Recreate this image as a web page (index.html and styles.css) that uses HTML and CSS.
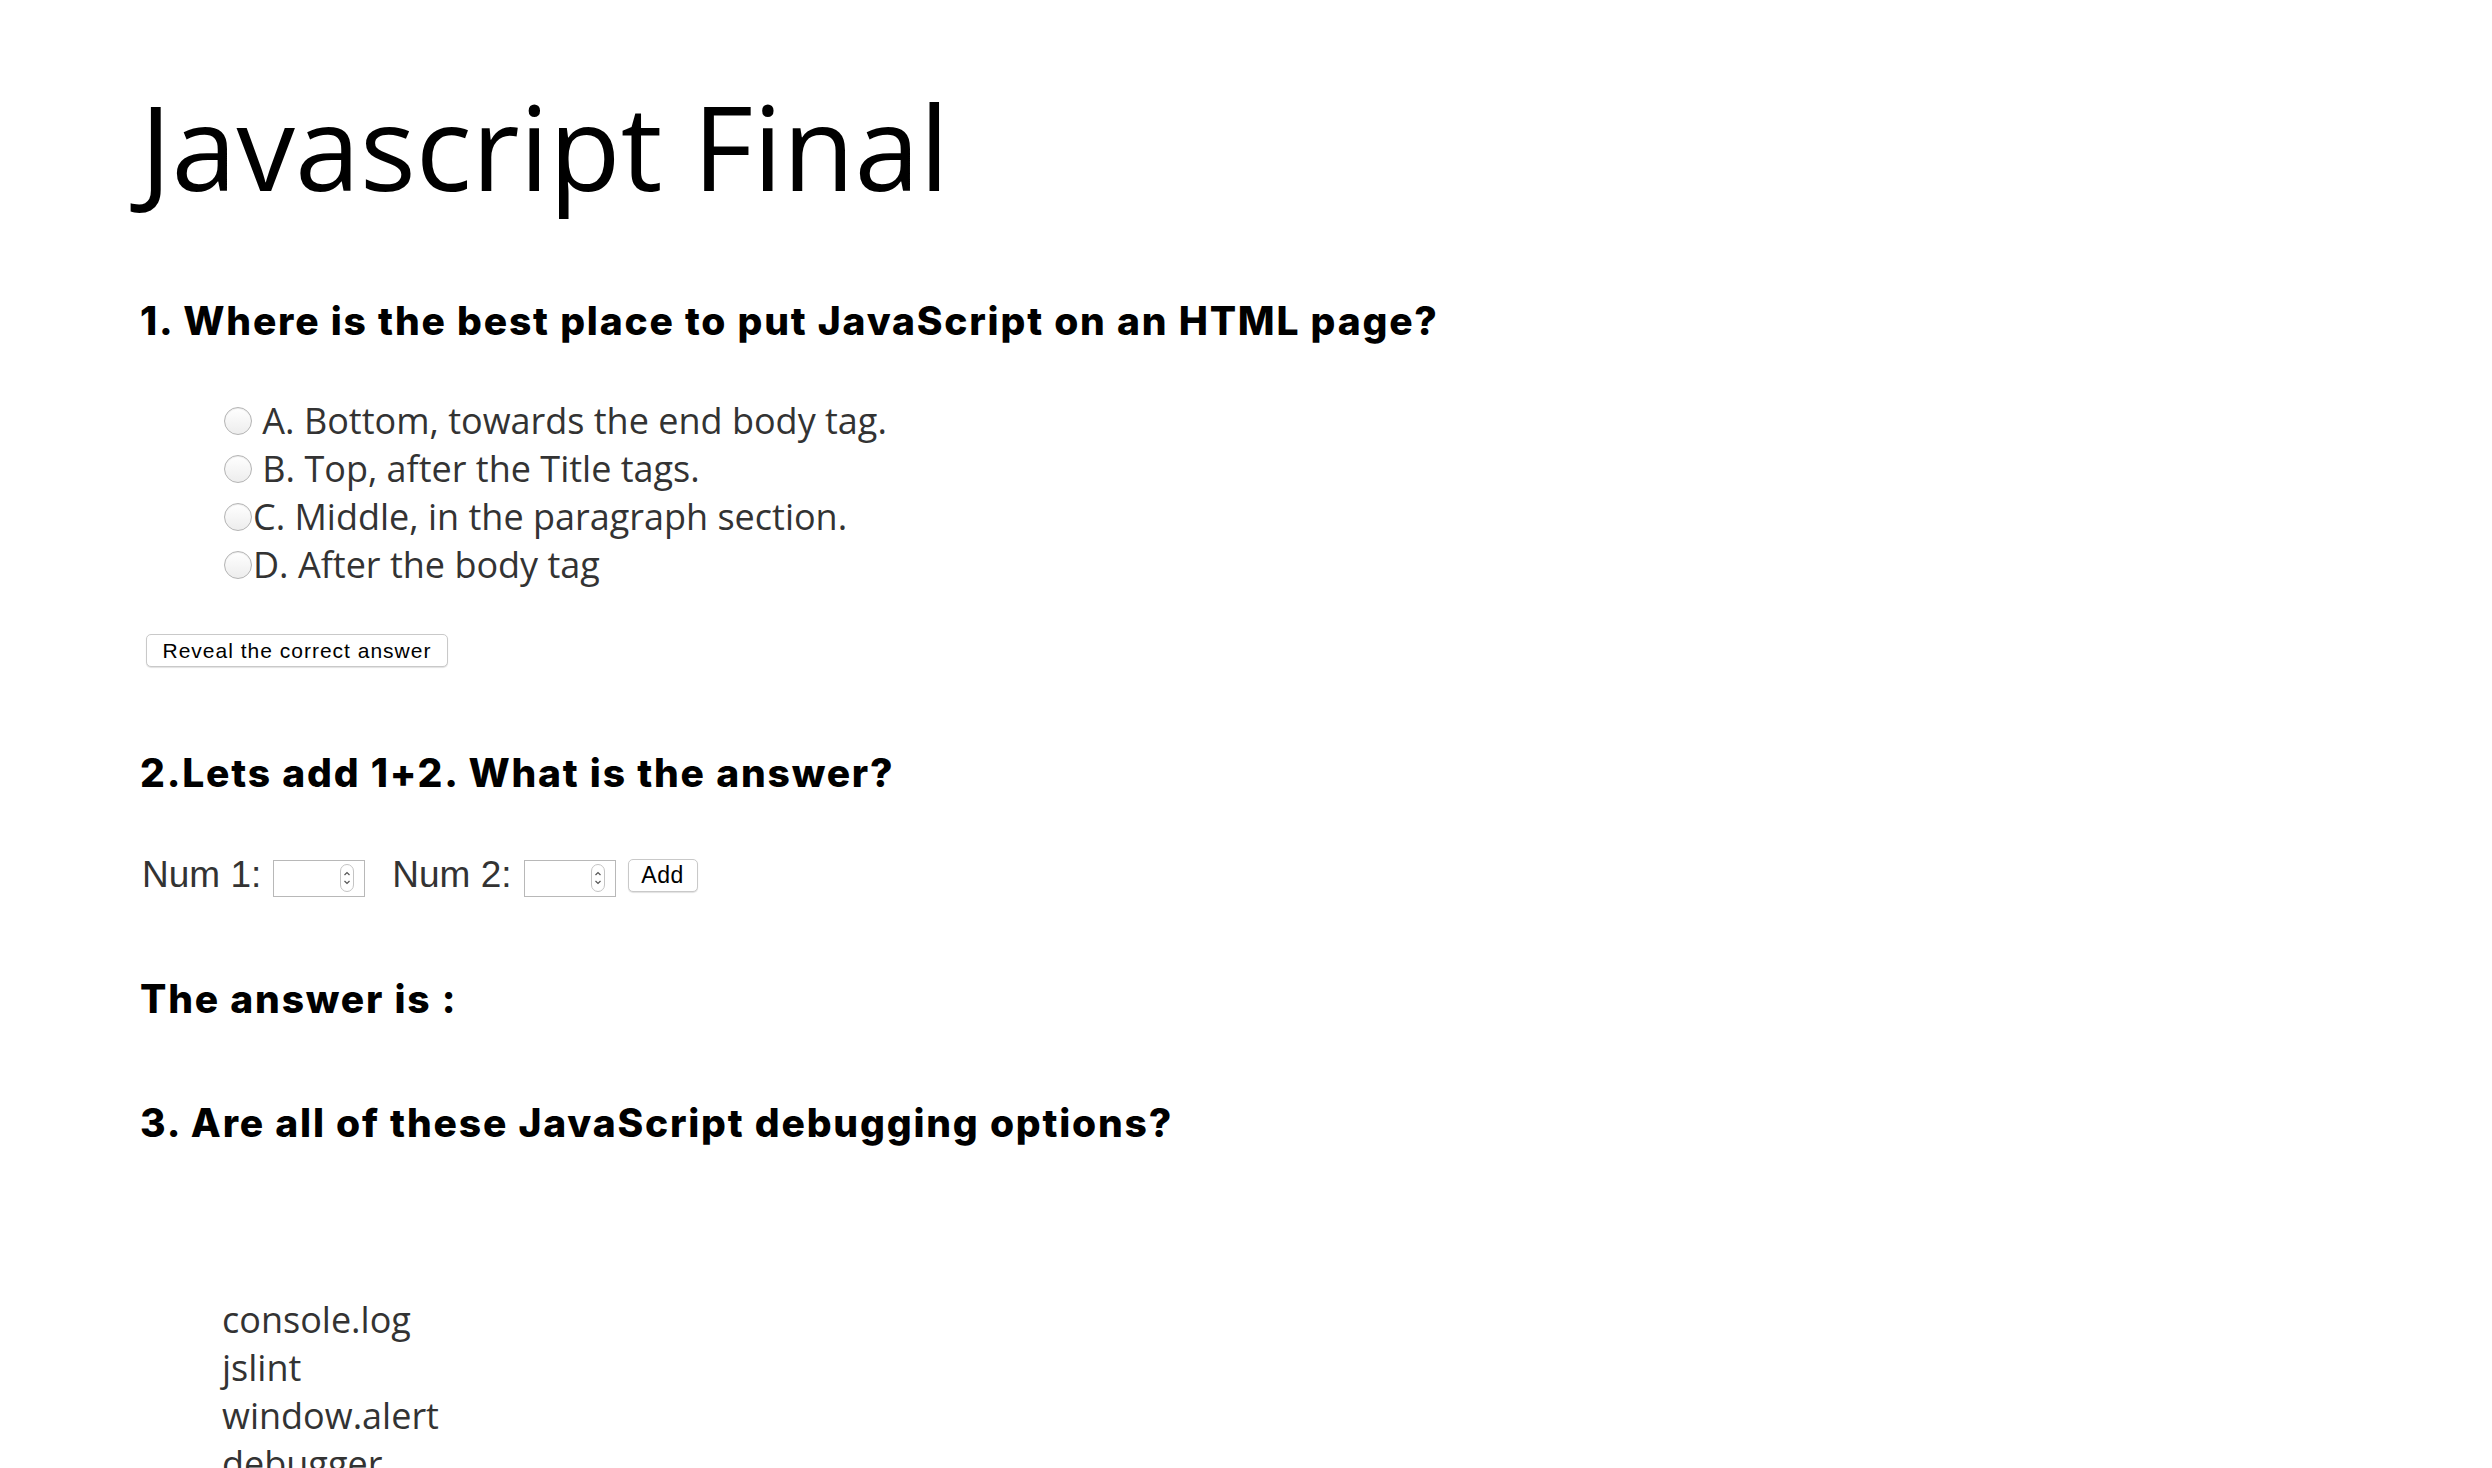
FILE: index.html
```html
<!DOCTYPE html>
<html lang="en">
<head>
<meta charset="utf-8">
<title>Javascript Final</title>
<link rel="stylesheet" href="styles.css">
</head>
<body>
<main class="page">
  <h1 class="title">Javascript Final</h1>

  <h2 class="question q1">1. Where is the best place to put JavaScript on an HTML page?</h2>
  <ul class="options">
    <li><span class="radio"></span> A. Bottom, towards the end body tag.</li>
    <li><span class="radio"></span> B. Top, after the Title tags.</li>
    <li><span class="radio"></span>C. Middle, in the paragraph section.</li>
    <li><span class="radio"></span>D. After the body tag</li>
  </ul>
  <button class="btn reveal" type="button">Reveal the correct answer</button>

  <h2 class="question q2">2.Lets add 1+2. What is the answer?</h2>
  <div class="calc">
    <span class="num-label">Num 1:</span>
    <span class="num-input"><span class="spin"><svg viewBox="0 0 14 28" width="14" height="28"><path d="M4.5 11 L7 8.5 L9.5 11" fill="none" stroke="#555" stroke-width="1.2"/><path d="M4.5 17 L7 19.5 L9.5 17" fill="none" stroke="#555" stroke-width="1.2"/></svg></span></span>
    <span class="num-label second">Num 2:</span>
    <span class="num-input"><span class="spin"><svg viewBox="0 0 14 28" width="14" height="28"><path d="M4.5 11 L7 8.5 L9.5 11" fill="none" stroke="#555" stroke-width="1.2"/><path d="M4.5 17 L7 19.5 L9.5 17" fill="none" stroke="#555" stroke-width="1.2"/></svg></span></span>
    <button class="btn add" type="button">Add</button>
  </div>

  <h3 class="answer">The answer is :</h3>

  <h2 class="question q3">3. Are all of these JavaScript debugging options?</h2>
  <ul class="debug">
    <li>console.log</li>
    <li>jslint</li>
    <li>window.alert</li>
    <li>debugger</li>
  </ul>
</main>
</body>
</html>
```

FILE: styles.css
```css
html, body {
  margin: 0;
  padding: 0;
  background: #ffffff;
}

.page {
  padding-left: 140px;
  padding-top: 67px;
}

.title {
  margin: 0;
  font-family: "Open Sans", sans-serif;
  font-weight: 400;
  font-size: 117px;
  line-height: 158px;
  color: #000;
}

.question,
.answer {
  margin: 0;
  font-family: "Inter", sans-serif;
  font-weight: 800;
  font-size: 39px;
  letter-spacing: 1.8px;
  line-height: 46px;
  color: #000;
}

.q1 { margin-top: 73px; }

.options {
  list-style: none;
  margin: 53px 0 0 0;
  padding: 0 0 0 84px;
  font-family: "Open Sans", sans-serif;
  font-size: 36px;
  line-height: 48px;
  color: #333;
}

.radio {
  display: inline-block;
  width: 26px;
  height: 26px;
  border-radius: 50%;
  border: 1px solid #b4b4b4;
  background: linear-gradient(#ffffff, #ededed);
  box-shadow: inset 0 1px 1px rgba(0,0,0,0.08);
  vertical-align: middle;
  margin-right: 1px;
  position: relative;
  top: -3px;
}

.btn {
  font-family: "Liberation Sans", Arial, sans-serif;
  color: #000;
  background: #fff;
  border: 1px solid #c9c9c9;
  border-radius: 5px;
  box-shadow: 0 1px 1px rgba(0,0,0,0.12);
  padding: 0;
  margin: 0;
  display: block;
}

.reveal {
  margin-top: 45px;
  margin-left: 6px;
  width: 302px;
  height: 33px;
  font-size: 21px;
  letter-spacing: 1px;
}

.q2 { margin-top: 83px; }

.calc {
  display: flex;
  align-items: center;
  height: 48px;
  margin-top: 55px;
}

.num-label {
  font-family: "Liberation Sans", Arial, sans-serif;
  font-size: 37px;
  color: #333;
  margin-left: 2px;
}

.num-label.second {
  margin-left: 27px;
}

.num-input {
  box-sizing: border-box;
  width: 92px;
  height: 37px;
  margin-left: 12px;
  border: 1px solid #b8b8b8;
  background: #fff;
  display: flex;
  align-items: center;
  justify-content: flex-end;
  padding-right: 10px;
  margin-top: 6px;
}

.spin {
  display: block;
  width: 14px;
  height: 28px;
  box-sizing: border-box;
  border: 1px solid #c4c4c4;
  border-radius: 7px;
}

.spin svg {
  display: block;
  margin: -1px 0 0 -1px;
}

.add {
  margin-left: 12px;
  width: 70px;
  height: 33px;
  font-size: 23px;
  letter-spacing: 0.5px;
}

.answer {
  margin-top: 77px;
}

.q3 { margin-top: 78px; }

.debug {
  list-style: none;
  margin: 150px 0 0 0;
  padding: 0 0 0 82px;
  font-family: "Open Sans", sans-serif;
  font-size: 36px;
  line-height: 48px;
  color: #333;
}
```
